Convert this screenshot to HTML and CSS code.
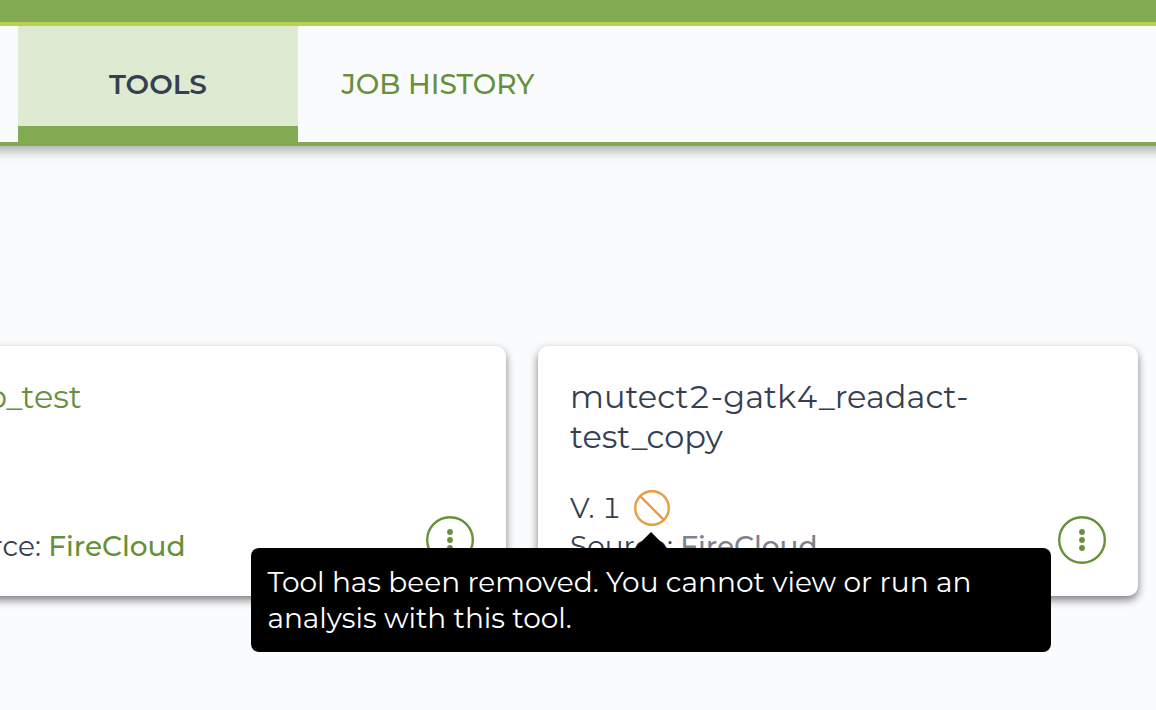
FILE: index.html
```html
<!DOCTYPE html>
<html lang="en">
<head>
<meta charset="utf-8">
<meta name="viewport" content="width=device-width, initial-scale=1">
<title>Tools</title>
<link rel="stylesheet" href="styles.css">
</head>
<body>
<header class="banner"></header>
<nav class="tabs">
  <a class="tab tab-active" href="#tools">TOOLS</a>
  <a class="tab" href="#jobs">JOB HISTORY</a>
</nav>
<main class="tools">
  <article class="card">
    <h2 class="card-title card-title-clipped"><a class="title-link" href="#tool">o_test</a></h2>
    <div class="card-footer">
      <div class="meta">
        <div class="source">Source: <a class="source-link" href="#source">FireCloud</a></div>
      </div>
      <button class="kebab" type="button" aria-label="More actions">
        <svg class="icon" viewBox="0 0 48 48"><circle class="ring" cx="24" cy="24" r="22.8"/><circle class="dot" cx="24" cy="16" r="2.9"/><circle class="dot" cx="24" cy="24" r="2.9"/><circle class="dot" cx="24" cy="32" r="2.9"/></svg>
      </button>
    </div>
  </article>
  <article class="card">
    <h2 class="card-title">mutect2-gatk4_readact-test_copy</h2>
    <div class="card-footer">
      <div class="meta">
        <div class="version">V. 1
          <span class="removed" aria-describedby="removed-tip">
            <svg class="icon" viewBox="0 0 36 36"><circle class="ban" cx="18" cy="18" r="16.8"/><path class="ban" d="M6.2 6.2 29.8 29.8"/></svg>
            <span class="tooltip" id="removed-tip" role="tooltip">Tool has been removed. You cannot view or run an analysis with this tool.</span>
          </span>
        </div>
        <div class="source">Source: <span class="source-off">FireCloud</span></div>
      </div>
      <button class="kebab" type="button" aria-label="More actions">
        <svg class="icon" viewBox="0 0 48 48"><circle class="ring" cx="24" cy="24" r="22.8"/><circle class="dot" cx="24" cy="16" r="2.9"/><circle class="dot" cx="24" cy="24" r="2.9"/><circle class="dot" cx="24" cy="32" r="2.9"/></svg>
      </button>
    </div>
  </article>
</main>
</body>
</html>
```
FILE: styles.css
```css
* { box-sizing: border-box; }

body {
  margin: 0;
  min-height: 100vh;
  background: #fafbfd;
  color: #363f52;
  font-family: Montserrat, Inter, "Open Sans", sans-serif;
  font-size: 28px;
  font-variant-numeric: tabular-nums;
  line-height: 36px;
  overflow-x: hidden;
}

a { color: #67903b; text-decoration: none; }

.banner {
  position: relative;
  z-index: 1;
  height: 26px;
  background: #82aa52;
  border-bottom: 4px solid #b9d151;
}

.tabs {
  display: flex;
  margin: 0 -16px;
  padding-left: 34px;
  border-bottom: 4px solid #82aa52;
  box-shadow: 0 4px 12px rgba(0, 0, 0, 0.35);
}

.tab {
  flex: 0 0 280px;
  padding: 40px 0 24px;
  border-bottom: 16px solid transparent;
  text-align: center;
  font-weight: 500;
}

.tab-active {
  background: #deead2;
  border-bottom-color: #82aa52;
  color: #363f52;
  font-weight: 600;
}

.tools {
  display: flex;
  justify-content: flex-end;
  gap: 32px;
  padding: 200px 18px 114px;
  overflow: hidden;
}

.card {
  flex: 0 0 600px;
  display: flex;
  flex-direction: column;
  min-height: 250px;
  padding: 31px 32px 32px;
  border-radius: 10px;
  background: #fff;
  box-shadow: 0 4px 8px rgba(0, 0, 0, 0.5);
}

.card-title {
  margin: 0;
  padding-right: 96px;
  font-size: 32px;
  font-weight: 400;
  line-height: 40px;
}

.card-title-clipped { padding-left: 49px; }

.card-footer {
  display: flex;
  align-items: flex-end;
  justify-content: space-between;
  margin-top: auto;
}

.version {
  display: flex;
  align-items: center;
  gap: 13px;
  margin-bottom: 2px;
}

.source-link, .source-off { font-weight: 500; }
.source-off { color: #7c818d; }

.icon { display: block; width: 100%; height: 100%; }

.kebab {
  width: 48px;
  height: 48px;
  padding: 0;
  border: 0;
  background: none;
  cursor: pointer;
}

.ring { fill: none; stroke: #67903b; stroke-width: 2.4; }
.dot { fill: #67903b; }

.removed {
  position: relative;
  width: 36px;
  height: 36px;
}

.ban { fill: none; stroke: #ea9d3e; stroke-width: 2.4; }

.tooltip {
  position: absolute;
  top: 58px;
  left: -383px;
  z-index: 1;
  width: 800px;
  padding: 16px;
  border-radius: 8px;
  background: #000;
  color: #fff;
}

.tooltip::before {
  content: "";
  position: absolute;
  bottom: 100%;
  left: 50%;
  margin-left: -16px;
  border: 16px solid transparent;
  border-top-width: 0;
  border-bottom-color: #000;
}
```
